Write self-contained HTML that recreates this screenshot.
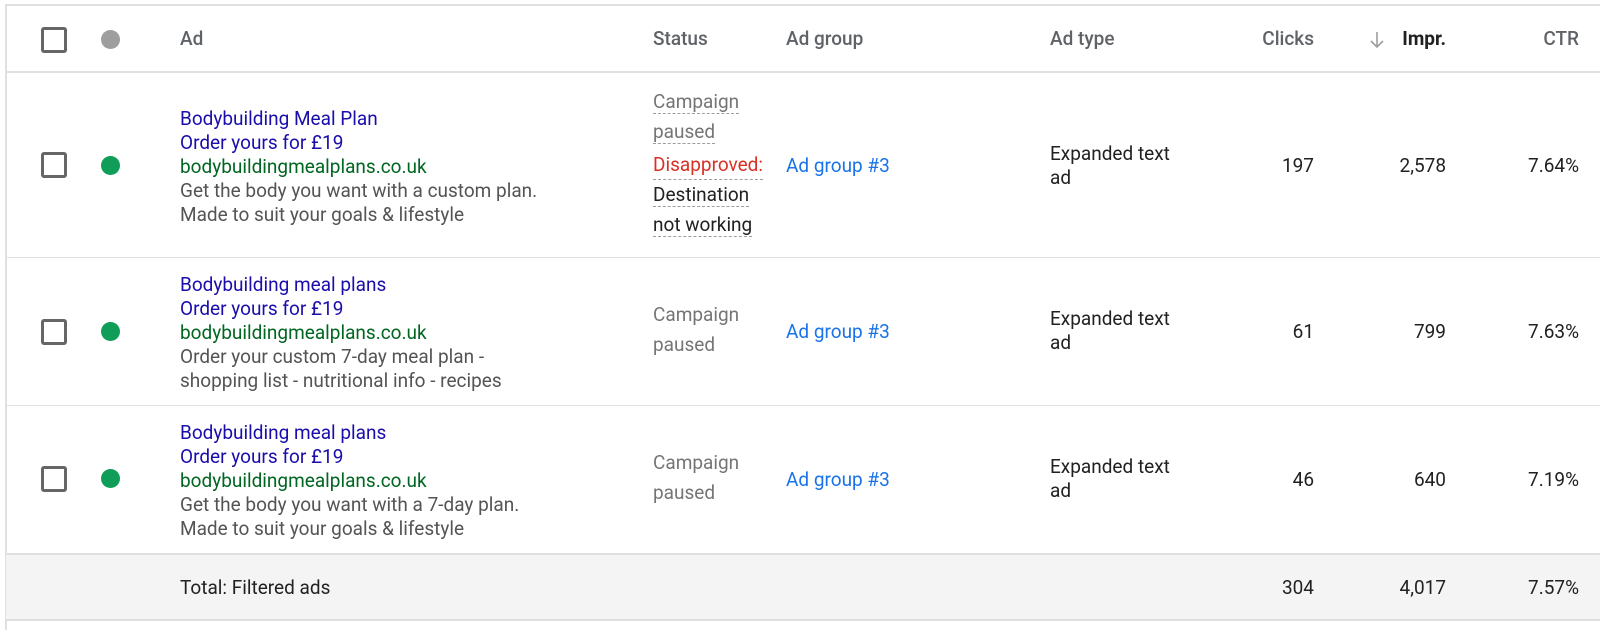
<!DOCTYPE html>
<html><head><meta charset="utf-8"><style>
body{margin:0;width:1600px;height:630px;background:#fff;position:relative;overflow:hidden;font-family:"Roboto","Liberation Sans",sans-serif;font-size:19px;color:#212121}
.a{position:absolute;white-space:nowrap;line-height:24px}
.hl{position:absolute;left:6px;right:0;height:2px;background:#e0e0e0}
.h{color:#5f6368;font-size:19px;font-weight:500;top:27px}
.cb{position:absolute;left:41px;width:20px;height:20px;border:3px solid #666;border-radius:3px}
.dot{position:absolute;left:101px;width:19px;height:19px;border-radius:50%;background:#0f9d58}
.ad{position:absolute;left:180px;line-height:24px;font-size:19px;white-space:nowrap}
.t{color:#1a0dab}.u{color:#006621}.d{color:#545454}
.st{position:absolute;left:653px;line-height:29.5px;font-size:19px;color:#757575;white-space:nowrap}
.st span{border-bottom:1px dashed #9e9e9e}
.ag{color:#1a73e8;left:786px}
.at{left:1050px}
.r{text-align:right}
</style></head><body>
<div style="position:absolute;left:5px;top:4px;width:2px;height:626px;background:#e0e0e0"></div>
<div class="hl" style="top:4px"></div>
<div class="hl" style="top:71px"></div>
<div class="hl" style="top:257px;height:1px"></div>
<div class="hl" style="top:405px;height:1px"></div>
<div style="position:absolute;left:6px;right:0;top:553px;height:64px;background:#f4f4f4;border-top:2px solid #e0e0e0;border-bottom:2px solid #e0e0e0"></div>

<div class="cb" style="top:27px"></div>
<div class="dot" style="top:30px;background:#9e9e9e"></div>
<div class="a h" style="left:180px">Ad</div>
<div class="a h" style="left:653px">Status</div>
<div class="a h" style="left:786px">Ad group</div>
<div class="a h" style="left:1050px">Ad type</div>
<div class="a h" style="right:286px">Clicks</div>
<svg style="position:absolute;left:1368px;top:30px" width="18" height="20" viewBox="0 0 18 20"><path d="M9 2V17M3 11L9 17L15 11" fill="none" stroke="#9e9e9e" stroke-width="1.6"/></svg>
<div class="a h" style="right:154px;color:#212121;font-weight:700">Impr.</div>
<div class="a h" style="right:21px">CTR</div>

<!-- row1 -->
<div class="cb" style="top:152px"></div>
<div class="dot" style="top:156px"></div>
<div class="ad" style="top:107px"><div class="t">Bodybuilding Meal Plan</div><div class="t">Order yours for £19</div><div class="u">bodybuildingmealplans.co.uk</div><div class="d">Get the body you want with a custom plan.</div><div class="d">Made to suit your goals &amp; lifestyle</div></div>
<div class="st" style="top:87px"><span>Campaign</span><br><span>paused</span><br><span style="color:#d93025;display:inline-block;margin-top:5px;line-height:28px">Disapproved:</span><br><span style="color:#212121">Destination</span><br><span style="color:#212121">not working</span></div>
<div class="a ag" style="top:154px">Ad group #3</div>
<div class="a at" style="top:142px">Expanded text<br>ad</div>
<div class="a r" style="right:286px;top:154px">197</div>
<div class="a r" style="right:154px;top:154px">2,578</div>
<div class="a r" style="right:21px;top:154px">7.64%</div>

<!-- row2 -->
<div class="cb" style="top:319px"></div>
<div class="dot" style="top:322px"></div>
<div class="ad" style="top:273px"><div class="t">Bodybuilding meal plans</div><div class="t">Order yours for £19</div><div class="u">bodybuildingmealplans.co.uk</div><div class="d">Order your custom 7-day meal plan -</div><div class="d">shopping list - nutritional info - recipes</div></div>
<div class="st" style="top:300px">Campaign<br>paused</div>
<div class="a ag" style="top:320px">Ad group #3</div>
<div class="a at" style="top:307px">Expanded text<br>ad</div>
<div class="a r" style="right:286px;top:320px">61</div>
<div class="a r" style="right:154px;top:320px">799</div>
<div class="a r" style="right:21px;top:320px">7.63%</div>

<!-- row3 -->
<div class="cb" style="top:466px"></div>
<div class="dot" style="top:469px"></div>
<div class="ad" style="top:421px"><div class="t">Bodybuilding meal plans</div><div class="t">Order yours for £19</div><div class="u">bodybuildingmealplans.co.uk</div><div class="d">Get the body you want with a 7-day plan.</div><div class="d">Made to suit your goals &amp; lifestyle</div></div>
<div class="st" style="top:448px">Campaign<br>paused</div>
<div class="a ag" style="top:468px">Ad group #3</div>
<div class="a at" style="top:455px">Expanded text<br>ad</div>
<div class="a r" style="right:286px;top:468px">46</div>
<div class="a r" style="right:154px;top:468px">640</div>
<div class="a r" style="right:21px;top:468px">7.19%</div>

<!-- total -->
<div class="a" style="left:180px;top:576px">Total: Filtered ads</div>
<div class="a r" style="right:286px;top:576px">304</div>
<div class="a r" style="right:154px;top:576px">4,017</div>
<div class="a r" style="right:21px;top:576px">7.57%</div>
</body></html>
